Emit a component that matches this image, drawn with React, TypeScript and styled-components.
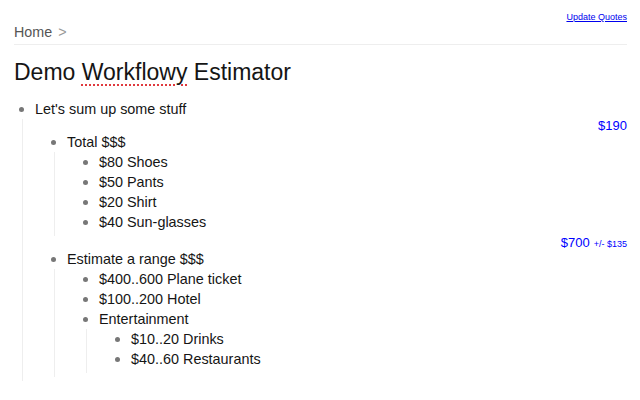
import styled, { createGlobalStyle } from 'styled-components'

const GlobalStyle = createGlobalStyle`
  html, body {
    margin: 0;
    padding: 0;
    background: #fff;
  }

  body {
    font-family: "Liberation Sans", Arial, sans-serif;
    color: #222;
  }
`

const Page = styled.div`
  padding: 0 13px 0 14px;
`

const TopBar = styled.div`
  display: flex;
  justify-content: flex-end;
  padding-top: 11px;
  height: 12px;
  line-height: 12px;
`

const QuoteLink = styled.a`
  font-size: 9px;
  color: #00e;
  text-decoration: underline;
  cursor: pointer;
`

const Breadcrumb = styled.div`
  display: flex;
  align-items: center;
  gap: 6px;
  font-size: 14.3px;
  line-height: 18px;
  color: #555;
  padding-bottom: 3px;
  border-bottom: 1px solid #eee;
`

const Sep = styled.span`
  color: #999;
`

const Title = styled.h1`
  margin: 13px 0 0;
  font-size: 23px;
  font-weight: normal;
  line-height: 28px;
  color: #151515;
`

const Misspelled = styled.span`
  text-decoration: underline dotted #e0393e;
  text-decoration-thickness: 2px;
  text-underline-offset: 4px;
`

const Tree = styled.div`
  margin-top: 13px;
`

const Row = styled.div`
  display: flex;
  align-items: center;
  height: 20px;
  line-height: 20px;
  font-size: 14.4px;
  color: #151515;
`

const Bullet = styled.span`
  flex: none;
  width: 5px;
  height: 5px;
  margin: 0 11px 0 5px;
  border-radius: 50%;
  background: #777;
`

const Children = styled.div`
  margin-left: 8px;
  padding: 0 0 4px 23px;
  border-left: 1px solid #eee;
`

const Estimate = styled.div`
  display: flex;
  justify-content: flex-end;
  align-items: baseline;
  gap: 4px;
  height: 13px;
  line-height: 13px;
  color: #00f;
  font-size: 13px;
`

const Spread = styled.span`
  font-size: 9px;
`

type Node = {
  text: string
  total?: string
  spread?: string
  children?: Node[]
}

const data: Node = {
  text: "Let's sum up some stuff",
  children: [
    {
      text: 'Total $$$',
      total: '$190',
      children: [
        { text: '$80 Shoes' },
        { text: '$50 Pants' },
        { text: '$20 Shirt' },
        { text: '$40 Sun-glasses' },
      ],
    },
    {
      text: 'Estimate a range $$$',
      total: '$700',
      spread: '+/- $135',
      children: [
        { text: '$400..600 Plane ticket' },
        { text: '$100..200 Hotel' },
        {
          text: 'Entertainment',
          children: [{ text: '$10..20 Drinks' }, { text: '$40..60 Restaurants' }],
        },
      ],
    },
  ],
}

function Item({ node }: { node: Node }) {
  return (
    <div>
      {node.total && (
        <Estimate>
          <span>{node.total}</span>
          {node.spread && <Spread>{node.spread}</Spread>}
        </Estimate>
      )}
      <Row>
        <Bullet />
        <span>{node.text}</span>
      </Row>
      {node.children && (
        <Children>
          {node.children.map((child) => (
            <Item key={child.text} node={child} />
          ))}
        </Children>
      )}
    </div>
  )
}

export default function App() {
  return (
    <>
      <GlobalStyle />
      <Page>
        <TopBar>
          <QuoteLink>Update Quotes</QuoteLink>
        </TopBar>
        <Breadcrumb>
          <span>Home</span>
          <Sep>&gt;</Sep>
        </Breadcrumb>
        <Title>
          Demo <Misspelled>Workflowy</Misspelled> Estimator
        </Title>
        <Tree>
          <Item node={data} />
        </Tree>
      </Page>
    </>
  )
}
